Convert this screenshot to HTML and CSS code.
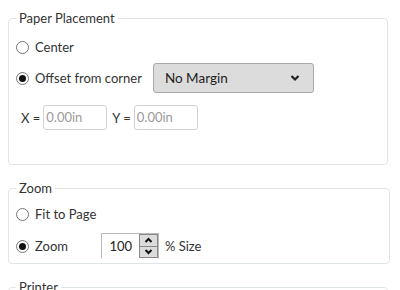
FILE: index.html
```html
<!DOCTYPE html>
<html lang="en">
<head>
	<meta charset="UTF-8">
	<title>Print Settings</title>
	<link rel="stylesheet" href="styles.css">
</head>
<body>
	<fieldset class="group group-paper">
		<legend>Paper Placement</legend>
		<div class="row row-center">
			<span class="radio"></span>
			<span class="label">Center</span>
		</div>
		<div class="row row-offset">
			<span class="radio checked"></span>
			<span class="label">Offset from corner</span>
			<div class="select">
				<span>No Margin</span>
				<svg width="10" height="8" viewBox="0 0 10 8"><polyline points="1.5,2 5,5.5 8.5,2" fill="none" stroke="#222" stroke-width="2.2"/></svg>
			</div>
		</div>
		<div class="row row-xy">
			<span class="xy">X =</span>
			<div class="textbox">0.00in</div>
			<span class="xy">Y =</span>
			<div class="textbox">0.00in</div>
		</div>
	</fieldset>

	<fieldset class="group group-zoom">
		<legend>Zoom</legend>
		<div class="row row-fit">
			<span class="radio"></span>
			<span class="label">Fit to Page</span>
		</div>
		<div class="row row-zoom">
			<span class="radio checked"></span>
			<span class="label label-zoom">Zoom</span>
			<div class="number">
				<span class="value">100</span>
				<div class="spin">
					<div class="spin-btn"><svg width="9" height="7" viewBox="0 0 9 7"><polyline points="1.5,5 4.5,2 7.5,5" fill="none" stroke="#111" stroke-width="2"/></svg></div>
					<div class="spin-btn"><svg width="9" height="7" viewBox="0 0 9 7"><polyline points="1.5,2 4.5,5 7.5,2" fill="none" stroke="#111" stroke-width="2"/></svg></div>
				</div>
			</div>
			<span class="label">% Size</span>
		</div>
	</fieldset>

	<fieldset class="group group-printer">
		<legend>Printer</legend>
		<div class="row"></div>
	</fieldset>
</body>
</html>
```

FILE: styles.css
```css
*{
	margin: 0;
	padding: 0;
	box-sizing: border-box;
}
html{
	overflow: hidden;
}
body{
	font-family: Lato, "Open Sans", sans-serif;
	font-size: 13px;
	color: #333;
	background: #fff;
	padding: 10px 12px 0 8px;
	width: 400px;
	height: 290px;
	overflow: hidden;
}
.group{
	border: 1px solid #dfe4ea;
	border-radius: 4px;
	padding: 0 7px;
	margin-bottom: 15px;
}
.group legend{
	padding: 0 3px;
	line-height: 16px;
	font-size: 13px;
	color: #333;
}
.group-paper{
	height: 155px;
	padding-top: 6px;
}
.group-zoom{
	height: 84px;
	margin-right: -2px;
	padding-top: 8px;
}
.group-printer{
	height: 30px;
}
.row{
	display: flex;
	align-items: center;
}
.row-center{
	height: 30px;
}
.row-offset{
	height: 30px;
	margin-top: 1px;
}
.row-xy{
	margin-top: 12px;
	padding-left: 5px;
}
.row-fit{
	height: 20px;
}
.row-zoom{
	height: 26px;
	margin-top: 9px;
}
.radio{
	width: 13px;
	height: 13px;
	border: 1px solid #767676;
	border-radius: 50%;
	background: #fff;
	display: flex;
	align-items: center;
	justify-content: center;
	flex: none;
}
.radio.checked::after{
	content: "";
	width: 7px;
	height: 7px;
	border-radius: 50%;
	background: #111;
}
.label{
	margin-left: 6px;
}
.label-zoom{
	width: 66px;
}
.select{
	margin-left: 11px;
	width: 161px;
	height: 30px;
	background: #dcdcdc;
	border: 1px solid #a9a9a9;
	border-radius: 3px;
	display: flex;
	align-items: center;
	justify-content: space-between;
	padding: 0 13px 0 11px;
	font-size: 13.5px;
	color: #222;
}
.xy{
	margin-right: 3px;
}
.textbox{
	width: 64px;
	height: 25px;
	border: 1px solid #cfd3d7;
	border-radius: 3px;
	padding-left: 2px;
	line-height: 23px;
	color: #9a9a9a;
	margin-right: 5px;
}
.number{
	display: flex;
	height: 26px;
	border: 1px solid #bbb;
	border-bottom-color: transparent;
	width: 58px;
}
.value{
	flex: 1;
	text-align: right;
	padding-right: 7px;
	line-height: 24px;
	color: #222;
}
.spin{
	width: 19px;
	display: flex;
	flex-direction: column;
}
.spin-btn{
	flex: 1;
	background: #dcdcdc;
	border: 1px solid #888;
	display: flex;
	align-items: center;
	justify-content: center;
}
.spin-btn + .spin-btn{
	border-top: none;
}
```
